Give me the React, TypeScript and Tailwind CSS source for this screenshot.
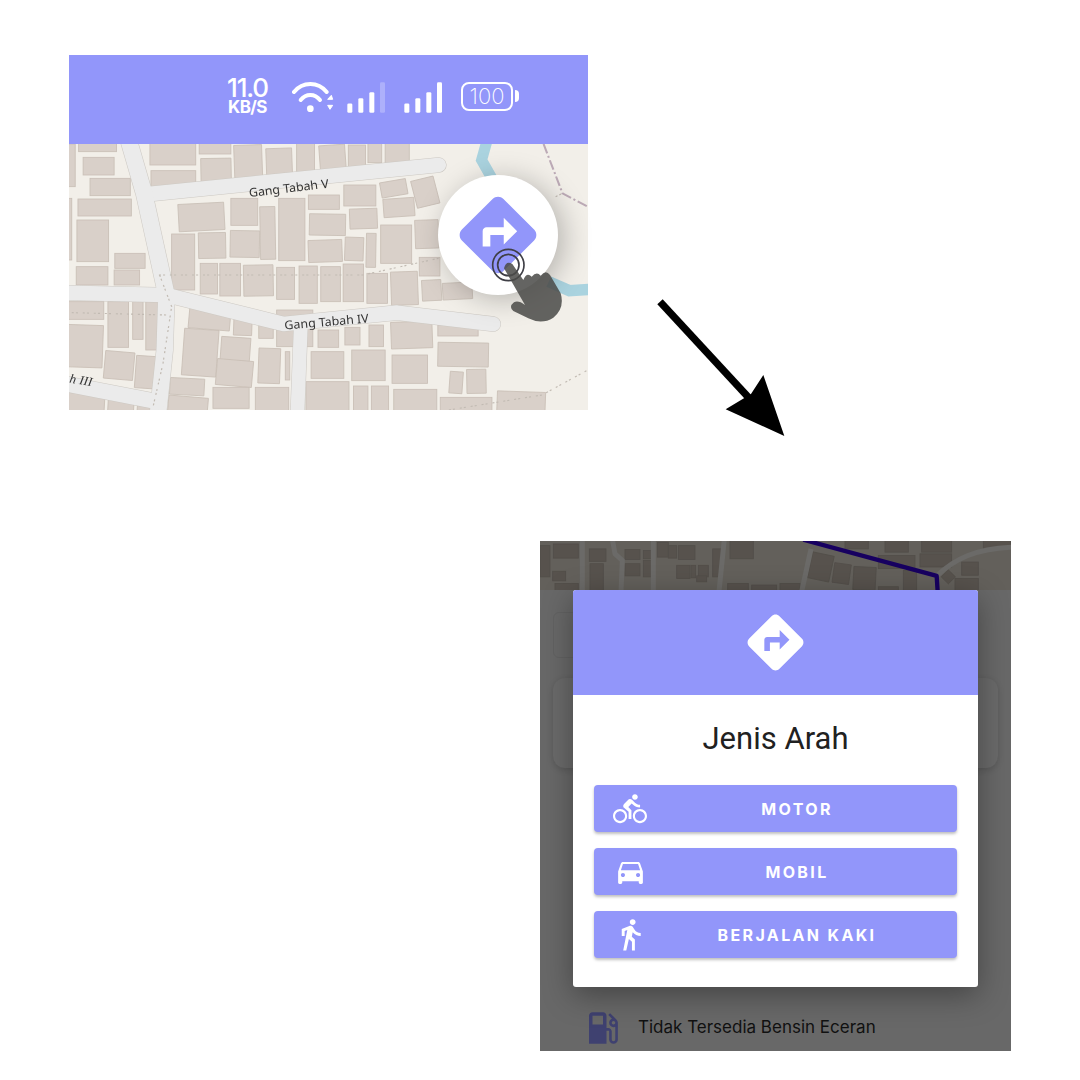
import { MdDirections, MdDirectionsBike, MdDirectionsCar, MdDirectionsWalk, MdLocalGasStation } from "react-icons/md";
import type { ReactNode } from "react";

type B = [number, number, number, number, number?];

const buildings: B[] = [
  [20, 282, 45, 410], [55, 275, 165, 305], [68, 322, 158, 375], [88, 385, 205, 437], [53, 447, 208, 498],
  [20, 445, 35, 630], [50, 510, 142, 635], [160, 610, 248, 655], [48, 650, 140, 705], [158, 660, 232, 705],
  [262, 275, 395, 345], [265, 362, 395, 412], [405, 275, 497, 312], [410, 325, 498, 405, -1], [507, 285, 588, 400, -2],
  [600, 295, 675, 395, -2], [688, 275, 740, 385], [755, 285, 830, 372, -4], [838, 285, 888, 360], [895, 275, 935, 338],
  [945, 275, 1015, 345], [345, 460, 478, 542, -3], [497, 445, 575, 526], [582, 470, 626, 628, -1], [636, 445, 712, 632],
  [722, 435, 812, 478], [825, 405, 918, 468], [932, 392, 1008, 438, -10], [1028, 385, 1095, 468, -14], [940, 445, 1030, 500, -4],
  [725, 492, 830, 556, 1], [842, 476, 922, 536, -2], [722, 570, 820, 636, -2], [828, 562, 882, 632, 2], [890, 550, 918, 652, 1],
  [932, 525, 1022, 640], [1032, 510, 1100, 595, -2], [325, 552, 392, 720], [403, 548, 482, 625, -1], [495, 542, 580, 622, 1],
  [408, 640, 458, 732], [465, 640, 525, 738], [534, 645, 620, 738, -1], [630, 652, 682, 748], [695, 648, 748, 760],
  [758, 650, 815, 755], [823, 642, 882, 755], [892, 670, 952, 760], [962, 665, 1040, 765, -2], [1044, 622, 1104, 678],
  [1052, 690, 1108, 752, -3], [1112, 698, 1198, 748, -3], [20, 755, 128, 808], [140, 755, 200, 892], [212, 755, 242, 868],
  [250, 755, 290, 900], [20, 825, 125, 952, 2], [130, 905, 215, 988, 5], [220, 918, 280, 1015, 4], [375, 780, 495, 838, 5],
  [505, 808, 558, 856, 2], [578, 825, 620, 865], [630, 780, 735, 890], [358, 838, 458, 978, 4], [468, 862, 553, 932, 4],
  [455, 930, 560, 1008, 5], [577, 895, 640, 1000, 2], [655, 905, 668, 990], [320, 985, 420, 1035, 3], [315, 1040, 430, 1090, 5],
  [445, 1012, 550, 1075], [568, 1012, 665, 1090], [715, 995, 840, 1090], [853, 1008, 895, 1090], [905, 1008, 955, 1090],
  [970, 1018, 1095, 1090], [1105, 1042, 1255, 1090], [730, 905, 825, 985], [848, 900, 945, 992], [965, 915, 1068, 1000],
  [1098, 878, 1245, 950, 1], [1132, 965, 1170, 1030, 4], [1182, 958, 1238, 1030, -1], [1270, 1025, 1410, 1090, 2],
  [750, 840, 810, 892], [828, 832, 872, 885], [898, 825, 940, 890], [962, 815, 1082, 895, -2], [1098, 825, 1215, 858],
  [140, 1050, 215, 1090, 3], [225, 1068, 275, 1090, 3], [20, 1030, 130, 1090, 3],
];

const darkBuildings: B[] = [
  [15, 30, 45, 125], [55, 25, 130, 68], [163, 40, 213, 78], [53, 108, 92, 137], [60, 145, 130, 170], [165, 85, 205, 170],
  [270, 42, 315, 72], [270, 85, 315, 122], [325, 45, 350, 70], [325, 75, 350, 125], [367, 20, 400, 65], [400, 30, 425, 68],
  [430, 30, 480, 72], [425, 90, 465, 130], [468, 90, 482, 128], [490, 90, 520, 125], [485, 122, 515, 140], [533, 40, 560, 125],
  [585, 10, 655, 70], [578, 145, 640, 170], [650, 150, 725, 170], [735, 145, 795, 170], [825, 55, 890, 135, 12], [895, 85, 945, 145, 8],
  [955, 95, 1022, 165, 3], [1030, 60, 1140, 100], [1155, 55, 1250, 95], [1105, 105, 1145, 170], [1030, 155, 1090, 170],
  [1160, 10, 1250, 50], [1280, 80, 1330, 120], [1260, 130, 1330, 170], [1345, 5, 1428, 40], [1225, 110, 1255, 140, 45],
  [930, 10, 1000, 40], [1050, 10, 1120, 50],
];

function Blocks({ items, fill, stroke }: { items: B[]; fill: string; stroke: string }) {
  return (
    <g fill={fill} stroke={stroke} strokeWidth="2.5">
      {items.map(([a, b, c, d, r], i) => (
        <rect key={i} x={a} y={b} width={c - a} height={d - b} transform={r ? `rotate(${r} ${(a + c) / 2} ${(b + d) / 2})` : undefined} />
      ))}
    </g>
  );
}

const roads: [string, number][] = [
  ["M1100 345 L250 433", 44],
  ["M200 270 L245 430 L310 735 L305 900 L285 1095", 48],
  ["M10 728 L310 735 L650 822 L980 788 L1258 822", 44],
  ["M700 830 L690 1095", 40],
  ["M10 1000 L285 1055", 46],
];

function MapArt() {
  return (
    <svg className="block h-[266px] w-[519px] blur-[0.4px]" viewBox="27 282 1507 798" preserveAspectRatio="none">
      <rect x="27" y="282" width="1507" height="798" fill="#f2efe9" />
      <path d="M1240 275 L1225 330 L1255 385" fill="none" stroke="#aad3df" strokeWidth="32" />
      <path d="M1420 695 L1480 722 L1540 718" fill="none" stroke="#aad3df" strokeWidth="34" />
      <path d="M1405 282 L1460 430 L1534 470" fill="none" stroke="#bcaab6" strokeWidth="6" strokeDasharray="30 8 6 8" />
      <Blocks items={buildings} fill="#d9d0c9" stroke="#c9bfb6" />
      <g fill="none" strokeLinecap="round" strokeLinejoin="round">
        {roads.map(([d, w], i) => <path key={i} d={d} stroke="#cdc9c3" strokeWidth={w + 3} />)}
        {roads.map(([d, w], i) => <path key={i} d={d} stroke="#ebebeb" strokeWidth={w} />)}
      </g>
      <g fill="none" stroke="#c2bbb3" strokeWidth="3.5" strokeDasharray="6 6 6 14">
        <path d="M288 675 L880 675 L1100 625" />
        <path d="M35 788 L310 795" />
        <path d="M290 675 L325 770 L300 940 L270 1075" />
        <path d="M1130 1080 L1400 1035 L1534 960" />
        <path d="M1440 440 L1460 430" />
      </g>
      <text x="665" y="427" textAnchor="middle" transform="rotate(-7 665 415)" fontFamily="'Noto Sans', sans-serif" fontSize="36" fill="#333">Gang Tabah V</text>
      <text x="775" y="828" textAnchor="middle" transform="rotate(-5 775 818)" fontFamily="'Noto Sans', sans-serif" fontSize="36" fill="#333">Gang Tabah IV</text>
      <text x="27" y="1003" transform="rotate(10 60 1000)" fontFamily="'Liberation Serif', serif" fontStyle="italic" fontSize="38" fill="#333">h III</text>
    </svg>
  );
}

function DimMap() {
  return (
    <svg className="block h-[49px] w-[471px] blur-[0.4px]" viewBox="15 16 1413 149" preserveAspectRatio="none">
      <rect x="15" y="16" width="1413" height="149" fill="#63605b" />
      <Blocks items={darkBuildings} fill="#57524d" stroke="#524e49" />
      <g fill="none" stroke="#6b6a68" strokeWidth="15" strokeLinejoin="round">
        <path d="M142 10 L142 170" />
        <path d="M232 10 L240 55 L262 75 L258 170" />
        <path d="M355 10 L355 170" />
        <path d="M568 10 L552 170" />
        <path d="M828 40 L800 170" />
        <path d="M1205 122 C1260 70 1320 40 1430 35" />
      </g>
      <path d="M805 12 L1205 122 L1208 170" fill="none" stroke="#170060" strokeWidth="13" strokeLinejoin="round" />
    </svg>
  );
}

function Wifi() {
  return (
    <svg width="42" height="31" viewBox="0 0 126 93" className="block">
      <g fill="none" stroke="#fff" strokeWidth="12" strokeLinecap="round">
        <path d="M6 30 C32 -2 78 -2 104 30" />
        <path d="M26 54 C42 34 68 34 84 54" />
      </g>
      <circle cx="55" cy="80" r="10" fill="#fff" />
      <path d="M107 52 L118 40 L122 52 Z M107 70 L122 70 L114 82 Z" fill="#fff" stroke="#fff" strokeWidth="3" strokeLinejoin="round" />
    </svg>
  );
}

function Signal({ faint }: { faint?: boolean }) {
  return (
    <svg width="39" height="31" viewBox="0 0 117 92" className="block">
      <g fill="#fff">
        <rect x="1" y="64" width="15" height="28" rx="4" />
        <rect x="34" y="48" width="15" height="44" rx="4" />
        <rect x="67" y="30" width="15" height="62" rx="4" />
        <rect x="99" y="0" width="15" height="92" rx="4" opacity={faint ? 0.25 : 1} />
      </g>
    </svg>
  );
}

function ModeButton({ icon, label }: { icon: ReactNode; label: string }) {
  return (
    <button className="flex h-[47px] w-full items-center rounded bg-[#9296fa] pl-[18px] pr-[11px] text-white shadow-[0_2px_3px_rgba(0,0,0,0.25)]">
      <span className="flex w-[36px] justify-center">{icon}</span>
      <span className="flex-1 text-center font-['Inter',sans-serif] text-base font-bold tracking-[2.35px]">{label}</span>
    </button>
  );
}

export default function App() {
  return (
    <div className="relative h-[1080px] w-[1080px] overflow-hidden bg-white pt-[55px]">
      <div className="relative ml-[69px] w-[519px]">
        <div className="flex h-[89px] items-center bg-[#9296fa] pb-[7px] pl-[157px] text-white">
          <div className="flex w-[43px] flex-col items-center font-['Inter',sans-serif]">
            <span className="text-[26px] font-medium leading-[23px] tracking-[-1.2px]">11.0</span>
            <span className="text-[17px] font-bold leading-[17px] tracking-[-0.6px]">KB/S</span>
          </div>
          <div className="ml-[23px] pt-[2px]"><Wifi /></div>
          <div className="ml-[13px] pt-[2px]"><Signal faint /></div>
          <div className="ml-[18px] pt-[2px]"><Signal /></div>
          <div className="ml-[18px] flex items-center gap-[2px]">
            <div className="flex h-[29px] w-[52px] items-center justify-center rounded-[8px] border-2 border-white font-['Inter',sans-serif] text-[22px] font-extralight leading-none">100</div>
            <div className="h-[12px] w-[4px] rounded-r-sm bg-white" />
          </div>
        </div>
        <MapArt />
        <div className="absolute left-[369px] top-[120px] flex h-[120px] w-[120px] items-center justify-center rounded-full bg-white shadow-[6px_4px_28px_rgba(0,0,0,0.25)]">
          <MdDirections size={92} color="#9296fa" />
        </div>
        <svg className="absolute left-[361px] top-[110px]" width="160" height="170" viewBox="0 0 480 510">
          <circle cx="235" cy="300" r="47" fill="none" stroke="#3f3f46" strokeWidth="5" />
          <circle cx="235" cy="300" r="32" fill="none" stroke="#3f3f46" strokeWidth="5" />
          <path d="M222 310 Q228 285 247 297 L280 345 Q290 320 305 335 Q320 318 332 332 Q347 312 360 330 L392 385 Q405 430 370 458 Q335 480 295 460 L250 438 Q235 425 252 412 Q265 405 285 420 Z" fill="#4a4a48" fillOpacity="0.86" />
        </svg>
      </div>

      <svg className="absolute left-[645px] top-[290px]" width="150" height="150" viewBox="0 0 450 450">
        <path d="M45 35 L310 322" stroke="#000" strokeWidth="22" />
        <path d="M418 438 L355 255 L318 312 L242 358 Z" fill="#000" />
      </svg>

      <div className="relative ml-[540px] mt-[131px] h-[510px] w-[471px] overflow-hidden bg-[#686868] font-['Inter',sans-serif]">
        <DimMap />
        <div className="ml-[13px] mt-[22px] h-[46px] w-[100px] rounded-md border border-[#626262]" />
        <div className="ml-[13px] mt-[20px] h-[90px] w-[445px] rounded-xl bg-[#6a6a6a] shadow-[0_2px_6px_rgba(0,0,0,0.15)]" />
        <div className="ml-[42px] mt-[239px] flex h-[42px] items-center gap-[14px] text-[17px] text-[#111]">
          <MdLocalGasStation size={42} color="#3f4170" />
          <span>Tidak Tersedia Bensin Eceran</span>
        </div>
        <div className="absolute left-[33px] top-[49px] h-[397px] w-[405px] overflow-hidden rounded-[3px] bg-white shadow-[0_8px_30px_rgba(0,0,0,0.35)]">
          <div className="flex h-[105px] items-center justify-center bg-[#9296fa]">
            <MdDirections size={67} color="#fff" />
          </div>
          <h2 className="mt-[25px] text-center font-['Roboto',sans-serif] text-[31px] font-normal leading-[38px] text-[#212121]">Jenis Arah</h2>
          <div className="mt-[27px] flex flex-col gap-[16px] px-[21px]">
            <ModeButton label="MOTOR" icon={<MdDirectionsBike size={34} />} />
            <ModeButton label="MOBIL" icon={<MdDirectionsCar size={33} />} />
            <ModeButton label="BERJALAN KAKI" icon={<MdDirectionsWalk size={35} />} />
          </div>
        </div>
      </div>
    </div>
  );
}
